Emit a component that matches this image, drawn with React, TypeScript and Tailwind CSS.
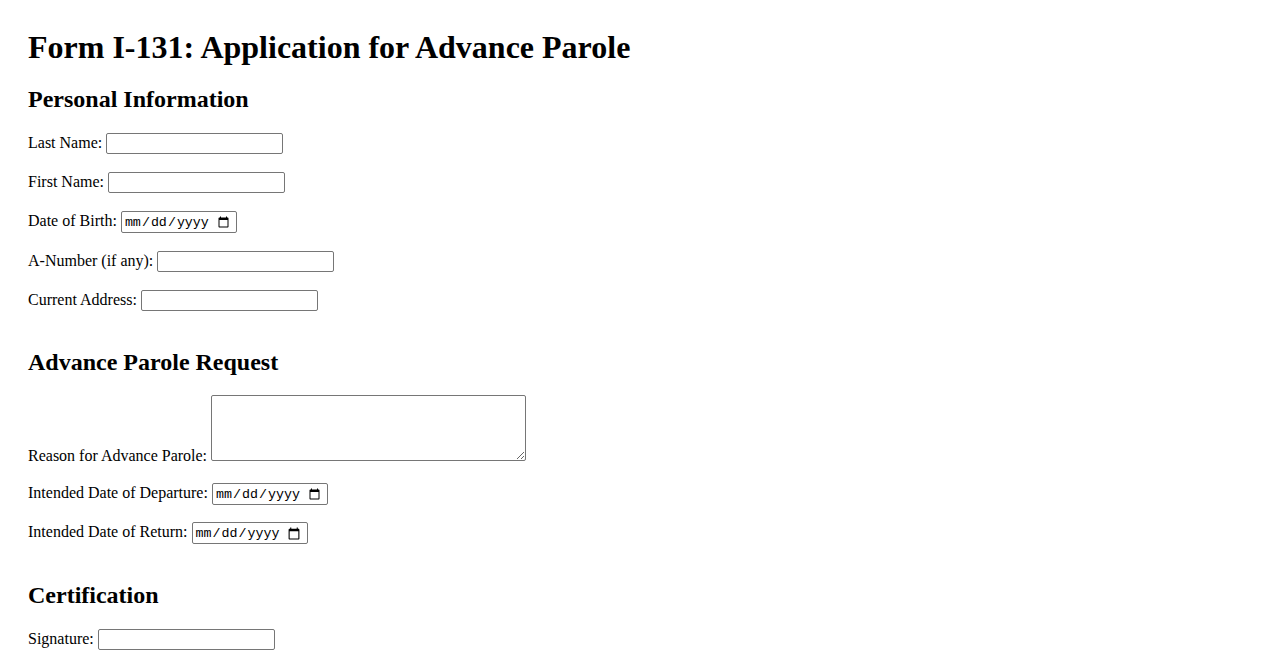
import React from 'react';

const textInput =
  "w-[177px] h-[21px] border border-[#767676] rounded-[2px] px-[3px] bg-white text-[13.33px] font-['Liberation_Sans',Arial,sans-serif] align-baseline";
const dateInput =
  "w-[116px] h-[22px] border border-[#767676] rounded-[2px] pl-[2px] pr-[4px] pt-[2px] bg-white text-black text-[13.33px] font-['Liberation_Mono','Courier_New',monospace] align-baseline";

function Row({ label, children, className = '' }: { label: string; children: React.ReactNode; className?: string }) {
  return (
    <div className={className}>
      <label>{label}</label> {children}
    </div>
  );
}

export default function App() {
  return (
    <div className="px-[28px] pt-[29px] pb-[20px] font-['Liberation_Serif','Times_New_Roman',serif] text-[16px] leading-[normal] text-black bg-white min-h-screen">
      <h1 className="text-[32px] font-bold leading-[normal]">Form I-131: Application for Advance Parole</h1>

      <section>
        <h2 className="mt-[20px] text-[24px] font-bold leading-[normal]">Personal Information</h2>
        <Row label="Last Name:" className="mt-[20px]">
          <input type="text" className={textInput} />
        </Row>
        <Row label="First Name:" className="mt-[18px]">
          <input type="text" className={textInput} />
        </Row>
        <Row label="Date of Birth:" className="mt-[18px]">
          <input type="date" className={dateInput} />
        </Row>
        <Row label="A-Number (if any):" className="mt-[18px]">
          <input type="text" className={textInput} />
        </Row>
        <Row label="Current Address:" className="mt-[18px]">
          <input type="text" className={textInput} />
        </Row>
      </section>

      <section>
        <h2 className="mt-[38px] text-[24px] font-bold leading-[normal]">Advance Parole Request</h2>
        <Row label="Reason for Advance Parole:" className="mt-[19px]">
          <textarea className="w-[315px] h-[66px] border border-[#767676] rounded-[2px] p-[2px] bg-white text-[13.33px] font-['Liberation_Mono',monospace] align-baseline" />
        </Row>
        <Row label="Intended Date of Departure:" className="mt-[18px]">
          <input type="date" className={dateInput} />
        </Row>
        <Row label="Intended Date of Return:" className="mt-[17px]">
          <input type="date" className={dateInput} />
        </Row>
      </section>

      <section>
        <h2 className="mt-[38px] text-[24px] font-bold leading-[normal]">Certification</h2>
        <Row label="Signature:" className="mt-[20px]">
          <input type="text" className={textInput} />
        </Row>
      </section>
    </div>
  );
}
